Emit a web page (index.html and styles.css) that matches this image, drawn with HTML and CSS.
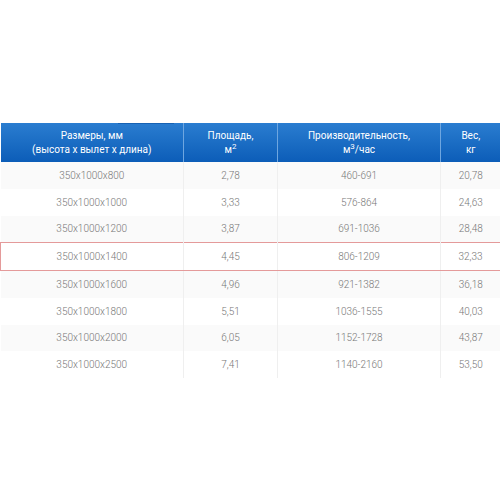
FILE: index.html
```html
<!DOCTYPE html>
<html lang="ru">
<head>
<meta charset="utf-8">
<link rel="stylesheet" href="styles.css">
</head>
<body>
<div class="wrap">
  <table class="spec">
    <colgroup>
      <col class="c1"><col class="c2"><col class="c3"><col class="c4">
    </colgroup>
    <thead>
      <tr>
        <th class="tab">Размеры, мм<br>(высота х вылет х длина)</th>
        <th>Площадь,<br>м<sup>2</sup></th>
        <th>Производительность,<br>м<sup>3</sup>/час</th>
        <th>Вес,<br>кг</th>
      </tr>
    </thead>
    <tbody>
      <tr><td>350x1000x800</td><td>2,78</td><td>460-691</td><td>20,78</td></tr>
      <tr><td>350x1000x1000</td><td>3,33</td><td>576-864</td><td>24,63</td></tr>
      <tr><td>350x1000x1200</td><td>3,87</td><td>691-1036</td><td>28,48</td></tr>
      <tr class="hl"><td>350x1000x1400</td><td>4,45</td><td>806-1209</td><td>32,33</td></tr>
      <tr><td>350x1000x1600</td><td>4,96</td><td>921-1382</td><td>36,18</td></tr>
      <tr><td>350x1000x1800</td><td>5,51</td><td>1036-1555</td><td>40,03</td></tr>
      <tr><td>350x1000x2000</td><td>6,05</td><td>1152-1728</td><td>43,87</td></tr>
      <tr><td>350x1000x2500</td><td>7,41</td><td>1140-2160</td><td>53,50</td></tr>
    </tbody>
  </table>
</div>
</body>
</html>
```
FILE: styles.css
```css
html, body {
  margin: 0;
  padding: 0;
  background: #fff;
}
.wrap {
  padding-top: 123px;
}
.spec {
  width: 500px;
  border-collapse: collapse;
  table-layout: fixed;
  font-family: Roboto, "Liberation Sans", sans-serif;
  font-size: 10px;
  font-weight: 300;
}
.c1 { width: 183px; }
.c2 { width: 94px; }
.c3 { width: 163px; }
.c4 { width: 60px; }
.spec thead tr {
  background: linear-gradient(#2a7dd0, #0c5db8);
}
.spec th {
  height: 39px;
  padding: 0;
  color: #fff;
  font-weight: 400;
  line-height: 14px;
  text-align: center;
  border-left: 1px solid #6ea6e0;
}
.spec th:first-child { border-left: none; }
.spec th.tab {
  position: relative;
}
.spec th.tab::before {
  content: "";
  position: absolute;
  top: 0;
  left: 117px;
  width: 56px;
  height: 1px;
  background: #1762b4;
}
.spec sup {
  font-size: 8px;
  line-height: 0;
  vertical-align: 4px;
}
.spec td {
  height: 26.75px;
  padding: 0;
  color: #777;
  text-align: center;
  border-left: 1px solid #efefef;
}
.spec td:first-child { border-left: none; }
.spec tbody tr:nth-child(odd) { background: #fafafa; }
.spec tbody tr:nth-child(even) { background: #fff; }
.spec tr.hl td {
  border-top: 1px solid #e49a9a;
  border-bottom: 1px solid #e49a9a;
}
.spec tr.hl td:first-child { border-left: 1px solid #e49a9a; }
.spec tr.hl td:last-child { border-right: 1px solid #e49a9a; }
```
